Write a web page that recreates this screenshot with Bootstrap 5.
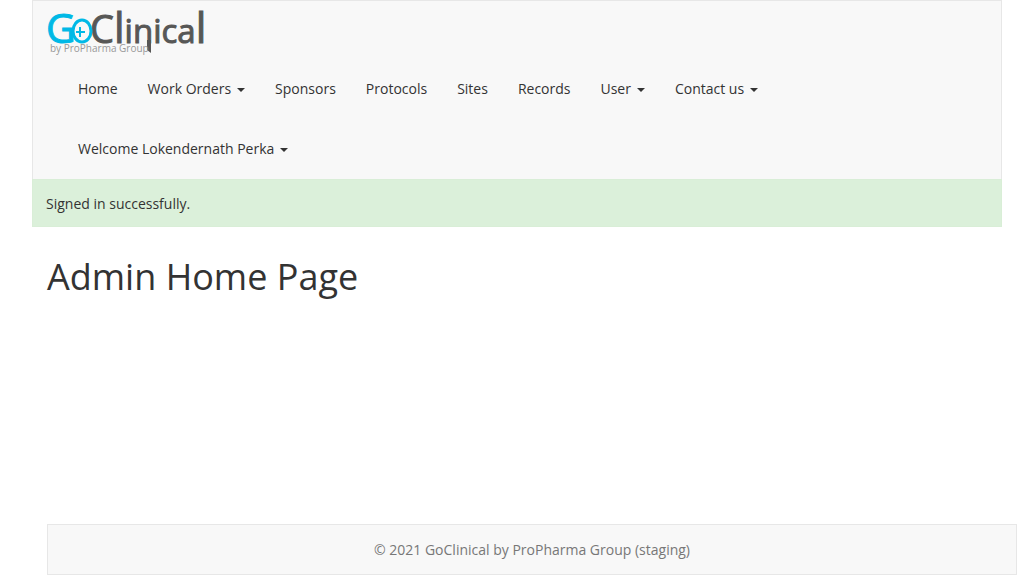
<!DOCTYPE html>
<html lang="en">
<head>
<meta charset="utf-8">
<meta name="viewport" content="width=device-width, initial-scale=1">
<title>GoClinical</title>
<link href="https://cdn.jsdelivr.net/npm/bootstrap@5.3.0/dist/css/bootstrap.min.css" rel="stylesheet">
<style>
  body { font-family: "Open Sans", sans-serif; font-size: 14px; line-height: 20px; color: #333; background: #fff; }
  .page-shell { max-width: 970px; }
  .site-nav { background: #f8f8f8; border: 1px solid #e7e7e7; border-bottom: 0; }
  .brand-link { height: 58px; padding: 7px 15px 0; }
  .brand-link svg { overflow: visible; }
  .site-nav .nav { padding-left: 30px; }
  .site-nav .nav-link { padding: 20px 15px; color: #333; }
  .site-nav .dropdown-toggle::after { border-top: 4px solid; border-right: 4px solid transparent; border-left: 4px solid transparent; margin-left: 6px; vertical-align: middle; }
  .flash { background: #dbf0da; border: 1px solid #d9eed7; padding: 14px 13px 12px; }
  .page-title { font-size: 36px; line-height: 40px; font-weight: 400; margin: 30px 15px 10px; }
  .site-footer { background: #f8f8f8; border: 1px solid #e7e7e7; color: #777; padding: 15px; margin-left: 15px; margin-right: -15px; height: 51px; }
</style>
</head>
<body>
<div class="page-shell mx-auto min-vh-100 d-flex flex-column">
  <header class="site-nav">
    <a class="brand-link d-block" href="#" aria-label="GoClinical by ProPharma Group">
      <svg class="d-block" width="156" height="48" viewBox="0 0 156 48">
        <g font-family="'Open Sans', sans-serif" stroke-width="1">
          <text x="-2" y="35" font-size="41" fill="#00b9e6" stroke="#00b9e6">G</text>
          <text x="42" y="35" font-size="38" fill="#575756" stroke="#575756">C</text>
          <text x="66" y="35" font-size="33" fill="#575756" stroke="#575756" stroke-width="2"><tspan font-size="42" stroke-width="1">l</tspan><tspan stroke-width="1">inica</tspan><tspan font-size="42" stroke-width="1">l</tspan></text>
        </g>
        <path d="M99 32h4v13l-4-3z" fill="#575756"/>
        <ellipse cx="34" cy="23" rx="9" ry="11" fill="#f8f8f8" stroke="#00b9e6" stroke-width="3"/>
        <path d="M28 24h9M32 19v10" stroke="#00b9e6" stroke-width="2"/>
        <text x="2" y="44" font-family="'Open Sans', sans-serif" font-size="10" fill="#999">by ProPharma Group</text>
      </svg>
    </a>
    <nav aria-label="Main">
      <ul class="nav">
        <li class="nav-item"><a class="nav-link" href="#">Home</a></li>
        <li class="nav-item"><a class="nav-link dropdown-toggle" href="#">Work Orders</a></li>
        <li class="nav-item"><a class="nav-link" href="#">Sponsors</a></li>
        <li class="nav-item"><a class="nav-link" href="#">Protocols</a></li>
        <li class="nav-item"><a class="nav-link" href="#">Sites</a></li>
        <li class="nav-item"><a class="nav-link" href="#">Records</a></li>
        <li class="nav-item"><a class="nav-link dropdown-toggle" href="#">User</a></li>
        <li class="nav-item"><a class="nav-link dropdown-toggle" href="#">Contact us</a></li>
      </ul>
      <ul class="nav">
        <li class="nav-item"><a class="nav-link dropdown-toggle" href="#">Welcome Lokendernath Perka</a></li>
      </ul>
    </nav>
  </header>
  <div class="flash" role="alert">Signed in successfully.</div>
  <main>
    <h1 class="page-title">Admin Home Page</h1>
  </main>
  <footer class="site-footer mt-auto text-center">© 2021 GoClinical by ProPharma Group (staging)</footer>
</div>
<script src="https://cdn.jsdelivr.net/npm/bootstrap@5.3.0/dist/js/bootstrap.bundle.min.js"></script>
</body>
</html>
